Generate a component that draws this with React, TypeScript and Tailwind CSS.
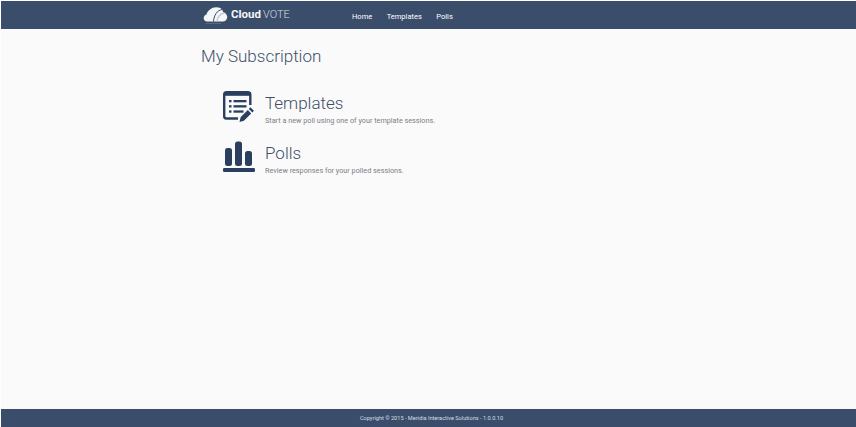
const font = { fontFamily: 'Roboto, sans-serif' }

const cards = [
  { title: 'Templates', sub: 'Start a new poll using one of your template sessions.', icon: <TemplatesIcon /> },
  { title: 'Polls', sub: 'Review responses for your polled sessions.', icon: <PollsIcon /> },
]

function TemplatesIcon() {
  return (
    <svg width="32" height="32" viewBox="0 0 32 32" fill="none">
      <path d="M15 27.500H3.500A2.300 2.300 0 0 1 1.200 25.200V3.500A2.300 2.300 0 0 1 3.500 1.200h21.500A2.300 2.300 0 0 1 27.300 3.500V14" stroke="#2a3f5f" strokeWidth="2.400" />
      <rect x="1" y="1" width="27" height="3.800" fill="#2a3f5f" />
      <rect x="6" y="9" width="2.500" height="2.300" fill="#2a3f5f" />
      <rect x="10.500" y="9" width="13" height="2.300" fill="#2a3f5f" />
      <rect x="6" y="14.200" width="2.500" height="2.300" fill="#2a3f5f" />
      <rect x="10.500" y="14.200" width="13" height="2.300" fill="#2a3f5f" />
      <rect x="6" y="19.400" width="2.500" height="2.300" fill="#2a3f5f" />
      <rect x="10.500" y="19.400" width="10" height="2.300" fill="#2a3f5f" />
      <path d="M27.300 16.300l3.600 3.400-1.500 1.700-3.600-3.400zM24.800 19.100l3.400 3.300-7.300 7.300-4.400 1.200 1.100-4.600z" fill="#2a3f5f" />
    </svg>
  )
}

function PollsIcon() {
  return (
    <svg width="32" height="32" viewBox="0 0 32 32" fill="#2a3f5f">
      <rect x="2" y="7" width="7" height="18" rx="2.500" />
      <rect x="12" y="0.500" width="7" height="24.500" rx="2.500" />
      <rect x="22" y="10" width="7" height="15" rx="2.500" />
      <rect x="0" y="27" width="32" height="4" rx="1.200" />
    </svg>
  )
}

function CloudLogo() {
  return (
    <svg width="26" height="18" viewBox="0 0 26 18">
      <path d="M5 15.500C1 15.500 0.500 9.500 4.500 8.500 5.500 4.500 11 0.500 15.500 1.500 18.500 1.500 21 3.500 21 6 24 7 26 10 25 12.500 24 14.500 23 15.500 21 15.500Z" fill="#f4f6f8" />
      <path d="M20 3.500C15 4.500 12 9 11.500 15.500" stroke="#3a4d6b" strokeWidth="1" fill="none" />
      <path d="M22 7C18 8 15.500 11 15 15.500" stroke="#c3cad4" strokeWidth="1.500" fill="none" />
      <path d="M4 17h15v.5H4z" fill="#76869c" />
    </svg>
  )
}

export default function App() {
  return (
    <div className="flex h-[427px] w-[856px] flex-col bg-white pt-px pl-px" style={font}>
      <header className="flex h-[28px] flex-none items-center bg-[#3a4d6b] pl-[201px]">
        <div className="flex w-[150px] items-center">
          <CloudLogo />
          <span className="ml-[3px] text-[11.500px] font-bold text-[#f4f6f8]">Cloud</span>
          <span className="ml-[2px] text-[11px] font-light text-[#d5dbe3]">VOTE</span>
        </div>
        <nav className="mt-[3px] flex gap-[14.500px] text-[7.500px] text-white">
          <span>Home</span>
          <span>Templates</span>
          <span>Polls</span>
        </nav>
      </header>

      <main className="flex-1 bg-[#fafafa] pl-[200px]">
        <h1 className="mt-[15px] text-[17px] leading-[24px] font-light text-[#42526b]">My Subscription</h1>
        <div className="mt-[23px] ml-[22px] flex flex-col gap-[16px]">
          {cards.map((card) => (
            <div key={card.title} className="flex h-[34px] items-start">
              <div className="mr-[10px] w-[32px] flex-none">{card.icon}</div>
              <div>
                <p className="mb-px text-[17px] leading-[24px] font-light text-[#3e4f68]">{card.title}</p>
                <p className="text-[7.250px] leading-[10px] text-[#7b7f85]">{card.sub}</p>
              </div>
            </div>
          ))}
        </div>
      </main>

      <footer className="flex h-[18px] flex-none items-center justify-center bg-[#3a4d6b] pl-[6px] text-[5.600px] text-[#d8dde4]">
        Copyright © 2015 - Meridia Interactive Solutions - 1.0.0.10
      </footer>
    </div>
  )
}
